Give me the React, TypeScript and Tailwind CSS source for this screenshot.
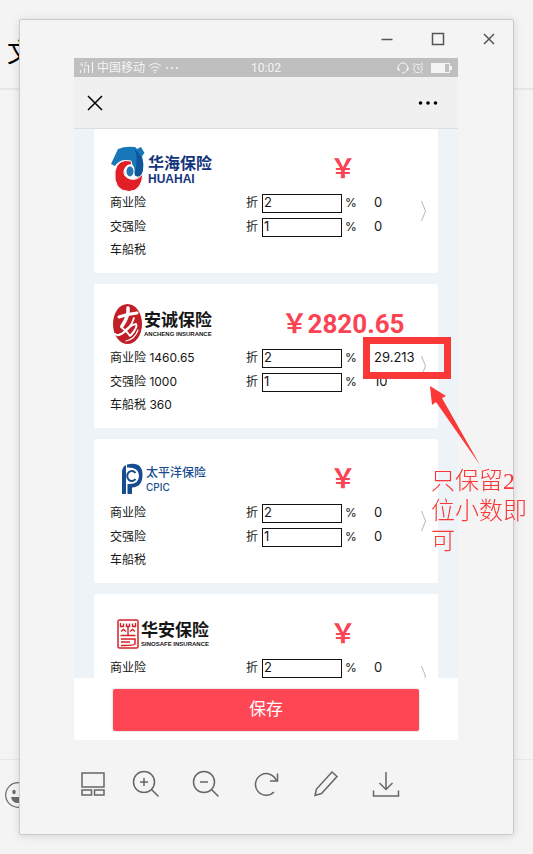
import type { ReactNode } from "react";

type Quote = {
  name: string;
  logo: ReactNode;
  total: string;
  commercial: string;
  compulsory: string;
  tax: string;
  commercialRebate: string;
  compulsoryRebate: string;
};

const CJK = "font-['Inter','Noto_Sans_CJK_SC',sans-serif]";

function HuahaiLogo() {
  return (
    <div className="flex h-11 items-center text-[#14357d]">
      <svg width="38" height="46" viewBox="0 0 38 46" aria-hidden="true">
        <path
          d="M1 18 L8 3 Q15 0 25 1 L27 3 L31 1 L34.500 7 L32 10 Q34 17 33 24 Q31 32 22 35 L14 27 L20 15 Q10 12 5 20 Z"
          fill="#1877b8"
        />
        <path d="M24 2 Q30 14 22 35 Q32 32 33 24 Q34 16 31 10 Z" fill="#0f559b" />
        <path
          d="M21 15 Q8 12 5 25 Q3 45 19 45.500 Q32 45 33 27 Q28 35 21 33 Q13 31 14 25 Q15 20 22 19 Z"
          fill="#e01f26"
          stroke="#fff"
        />
        <path d="M21 18 Q14 19 14.500 25 Q15 32 21 33.500 Q27 33 30 30 Q24 32 24.500 26 Q25 19 21 18Z" fill="#fff" />
        <ellipse cx="20" cy="25.500" rx="3.500" ry="5" fill="#2177b5" />
      </svg>
      <div>
        <div className="text-base leading-5 font-bold">华海保险</div>
        <div className="font-['Liberation_Sans',sans-serif] text-[12px] leading-3 font-bold">HUAHAI</div>
      </div>
    </div>
  );
}

function AnchengLogo() {
  return (
    <div className="flex h-11 items-center text-[#161616]">
      <svg width="34" height="42" viewBox="0 0 34 42" aria-hidden="true">
        <ellipse cx="17.500" cy="21" rx="14.500" ry="20" fill="#c01f26" />
        <g fill="none" stroke="#fff" strokeLinecap="round">
          <path d="M9 14 Q17 11 27 10" strokeWidth="3" />
          <path d="M18 5 Q19 13 12 23" strokeWidth="3.500" />
          <path d="M5 31 Q9 34 14 29 Q20 22 26 21 Q28 24 21 32" strokeWidth="2" />
          <path d="M11 24 Q17 28 20 33 M24 15 Q20 28 9 32" strokeWidth="1.800" />
          <path d="M28 27 Q25 36 16 38" strokeWidth="1.200" />
        </g>
      </svg>
      <div>
        <div className="text-[17px] leading-5 font-bold">安诚保险</div>
        <div className="font-['Liberation_Sans',sans-serif] text-[6px] leading-2 font-bold">ANCHENG INSURANCE</div>
      </div>
    </div>
  );
}

function CpicLogo() {
  return (
    <div className="flex h-11 items-center text-[#174d90]">
      <svg width="36" height="32" viewBox="0 0 36 32" aria-hidden="true">
        <path d="M12 31 V9 Q12 4 16 2 V31Z" fill="#174d90" />
        <path d="M17 1.500 Q32.500 -2 32.500 12 Q32.500 24 22 24.500 V31 H17.500 V21 Q29 22 29 12.500 Q28.500 4 17 4.500Z" fill="#174d90" />
        <path d="M25.500 10 A4.600 5 0 1 0 25.500 16" fill="none" stroke="#174d90" strokeWidth="2" />
      </svg>
      <div>
        <div className="text-[12px] leading-4 font-medium">太平洋保险</div>
        <div className="text-[10px] leading-3 font-medium">CPIC</div>
      </div>
    </div>
  );
}

function SinosafeLogo() {
  return (
    <div className="flex h-11 items-center text-[#161616]">
      <svg width="31" height="30" viewBox="0 0 31 30" fill="none" stroke="#d3222a" aria-hidden="true">
        <rect x="8" y="1" width="20" height="28" rx="1.500" strokeWidth="1.500" />
        <path d="M10.500 4 V7.500 H13.500 V4.500 M16.500 4.500 V7.500 H19.500 V4.500 M22.500 4.500 V7.500 H25.500 V4" strokeWidth="1.400" />
        <path d="M18 8 V17 M10.500 16.500 H25.500 M11 12.500 L13.500 10.500 L16 12.500 M20 12.500 L22.500 10.500 L25 12.500" strokeWidth="1.400" />
        <path d="M11 20 H25 V25 Q22 27 11 26.500 M11 23 H20" strokeWidth="1.500" />
      </svg>
      <div>
        <div className="text-[17px] leading-5 font-bold">华安保险</div>
        <div className="font-['Liberation_Sans',sans-serif] text-[6px] leading-2 font-bold">SINOSAFE INSURANCE</div>
      </div>
    </div>
  );
}

const quotes: Quote[] = [
  { name: "华海保险", logo: <HuahaiLogo />, total: "", commercial: "", compulsory: "", tax: "", commercialRebate: "0", compulsoryRebate: "0" },
  { name: "安诚保险", logo: <AnchengLogo />, total: "2820.65", commercial: "1460.65", compulsory: "1000", tax: "360", commercialRebate: "29.213", compulsoryRebate: "10" },
  { name: "太平洋保险", logo: <CpicLogo />, total: "", commercial: "", compulsory: "", tax: "", commercialRebate: "0", compulsoryRebate: "0" },
  { name: "华安保险", logo: <SinosafeLogo />, total: "", commercial: "", compulsory: "", tax: "", commercialRebate: "0", compulsoryRebate: "0" },
];

function RateRow({ label, company, amount, rate, rebate }: { label: string; company: string; amount: string; rate: string; rebate: string }) {
  return (
    <div className="flex h-6 items-center">
      <span className="flex-1">
        {label} {amount}
      </span>
      <label className="flex items-center">
        <span className="w-4">折</span>
        <input
          aria-label={`${company} ${label} 折扣`}
          defaultValue={rate}
          className="h-[19px] w-20 border border-[#111] bg-white px-px text-[13px] outline-none"
        />
        <span className="w-8 pl-[3px]">%</span>
      </label>
      <span className="w-16 text-[13px]">{rebate}</span>
    </div>
  );
}

function QuoteCard({ quote }: { quote: Quote }) {
  return (
    <article className="flex h-36 shrink-0 flex-col rounded-xs bg-white pl-4 text-[12px] text-[#151515]">
      <div className="flex h-[62px] shrink-0 items-end">
        <div className="flex-1">{quote.logo}</div>
        <div className="w-[190px] pb-1.5 text-center font-['Roboto','Noto_Sans_CJK_SC',sans-serif] text-[26px] leading-8 font-bold text-[#fa4454]">
          ￥{quote.total}
        </div>
      </div>
      <div className="relative">
        <RateRow label="商业险" company={quote.name} amount={quote.commercial} rate="2" rebate={quote.commercialRebate} />
        <RateRow label="交强险" company={quote.name} amount={quote.compulsory} rate="1" rebate={quote.compulsoryRebate} />
        <div className="flex h-[22px] items-center">车船税 {quote.tax}</div>
        <button aria-label="详情" className="absolute top-2 right-2.5 text-[#b8b8b8]">
          <svg width="8" height="24" viewBox="0 0 8 24" fill="none" stroke="currentColor">
            <path d="M1.500 2 L5.500 12 L1.500 22" />
          </svg>
        </button>
      </div>
    </article>
  );
}

function StatusBar() {
  return (
    <div className="grid h-[19px] shrink-0 grid-cols-[1fr_auto_1fr] items-center bg-[#bfbfbf] px-[5px] text-[12px] leading-4 text-[#f4f4f4]">
      <div className="flex items-center gap-[3px]">
        <svg width="15" height="13" viewBox="0 0 15 13" fill="none" stroke="currentColor" aria-hidden="true">
          <path d="M1.500 9 V12 M5.500 7 V12 M9.500 4 V12 M13.500 1 V12" strokeWidth="1.200" />
          <path d="M3 1 L1 4 H4 M3.500 2.500 V6 M8 1.500 H6 V5 H8 V3.500" strokeWidth="0.700" />
        </svg>
        <span>中国移动</span>
        <svg width="14" height="12" viewBox="0 0 14 12" fill="none" stroke="currentColor" aria-hidden="true">
          <path d="M1 4 Q7 -1 13 4 M3 6.500 Q7 3 11 6.500 M5 9 Q7 7 9 9" />
          <circle cx="7" cy="10.500" r="0.800" fill="currentColor" stroke="none" />
        </svg>
        <svg width="14" height="4" viewBox="0 0 14 4" fill="currentColor" aria-hidden="true">
          <circle cx="2" cy="2" r="1" />
          <circle cx="7" cy="2" r="1" />
          <circle cx="12" cy="2" r="1" />
        </svg>
      </div>
      <span className="font-['Roboto',sans-serif]">10:02</span>
      <div className="flex items-center justify-end gap-[3px]">
        <svg width="12" height="12" viewBox="0 0 12 12" fill="none" stroke="currentColor" aria-hidden="true">
          <path d="M2.500 9 A4.800 4.800 0 1 1 9.500 9 M1 5 V8 H3 M11 5 V8 H9 M9.500 9 L7 11 H5" />
        </svg>
        <svg width="12" height="12" viewBox="0 0 12 12" fill="none" stroke="currentColor" aria-hidden="true">
          <circle cx="6" cy="6.500" r="4.200" />
          <path d="M6 4 V7 H8 M0.800 3 L3 1 M11.200 3 L9 1 M2.500 10.500 L1.500 11.500 M9.500 10.500 L10.500 11.500" />
        </svg>
        <svg width="26" height="10" viewBox="0 0 26 10" aria-hidden="true">
          <rect x="4.500" y="0.500" width="18" height="9" fill="none" stroke="currentColor" />
          <rect x="5" y="1" width="13" height="8" fill="currentColor" />
          <rect x="23" y="3" width="2" height="4" fill="currentColor" />
        </svg>
      </div>
    </div>
  );
}

function IconButton({ label, children }: { label: string; children: ReactNode }) {
  return (
    <button aria-label={label} className="flex size-8 items-center justify-center">
      <svg width="28" height="28" viewBox="0 0 28 28" fill="none" stroke="currentColor" strokeWidth="1.500">
        {children}
      </svg>
    </button>
  );
}

function ChatBackdrop() {
  return (
    <div className="absolute inset-0 flex flex-col bg-[#f4f4f4]">
      <div className="flex h-[90px] items-center border-b-2 border-[#e6e6e6] pt-4 pl-[7px] text-[26px] text-black">文</div>
      <div className="flex-1" />
      <div className="h-[95px] border-t border-[#e8e8e8] pt-[22px] pl-[5px]">
        <svg width="26" height="26" viewBox="0 0 26 26" aria-hidden="true">
          <circle cx="13" cy="13" r="12.300" fill="none" stroke="#6b6b6b" strokeWidth="1.200" />
          <ellipse cx="9" cy="10" rx="1.700" ry="2.200" fill="#6b6b6b" />
          <ellipse cx="17" cy="10" rx="1.700" ry="2.200" fill="#6b6b6b" />
          <path d="M6 15 H20 Q19 21 13 21 Q7 21 6 15Z" fill="#6b6b6b" />
        </svg>
      </div>
    </div>
  );
}

export default function App() {
  return (
    <div className={`relative flex h-screen flex-col overflow-hidden p-[19px] ${CJK}`}>
      <ChatBackdrop />
      <main className="relative flex min-h-0 flex-1 flex-col rounded-xs border border-[#cbcbcb] bg-[#f4f4f4] shadow-[0_1px_10px_rgba(0,0,0,0.13)]">
        <div className="flex h-[38px] shrink-0 justify-end gap-[3px] text-[#555]">
          <button aria-label="最小化" className="flex w-12 items-center justify-center">
            <svg width="12" height="12" viewBox="0 0 12 12" stroke="currentColor" strokeWidth="1.500"><path d="M0.500 6.500 H11.500" /></svg>
          </button>
          <button aria-label="最大化" className="flex w-12 items-center justify-center">
            <svg width="14" height="14" viewBox="0 0 14 14" fill="none" stroke="currentColor" strokeWidth="1.500"><path d="M1.500 1.500 H12.500 V12.500 H1.500Z" /></svg>
          </button>
          <button aria-label="关闭" className="flex w-12 items-center justify-center">
            <svg width="12" height="12" viewBox="0 0 12 12" stroke="currentColor" strokeWidth="1.500"><path d="M1 1 L11 11 M11 1 L1 11" /></svg>
          </button>
        </div>

        <section className="mr-[55px] ml-[54px] flex min-h-0 flex-1 flex-col">
          <StatusBar />
          <div className="flex h-[52px] shrink-0 items-center justify-between border-b border-[#dedede] bg-[#f0f0f0] px-3 text-black">
            <button aria-label="返回" className="p-px">
              <svg width="16" height="16" viewBox="0 0 16 16" stroke="currentColor" strokeWidth="1.500"><path d="M1 1 L15 15 M15 1 L1 15" /></svg>
            </button>
            <button aria-label="更多" className="px-2">
              <svg width="20" height="4" viewBox="0 0 20 4" fill="currentColor">
                <circle cx="2.500" cy="2" r="1.800" />
                <circle cx="10" cy="2" r="1.800" />
                <circle cx="17.500" cy="2" r="1.800" />
              </svg>
            </button>
          </div>
          <div className="flex min-h-0 flex-1 flex-col gap-[11px] overflow-y-auto bg-[#eef3f7] px-5 [scrollbar-width:none]">
            {quotes.map((quote) => (
              <QuoteCard key={quote.name} quote={quote} />
            ))}
          </div>
          <div className="shrink-0 bg-white px-[39px] pt-[11px] pb-[9px]">
            <button className="h-[42px] w-full rounded-xs bg-[#ff4655] text-[17px] text-white shadow-[0_0_2px_rgba(0,0,0,0.3)]">保存</button>
          </div>
        </section>

        <div className="flex h-[94px] shrink-0 items-center gap-[21px] pb-1.5 pl-[57px] text-[#666]">
          <IconButton label="缩略图">
            <path d="M3 3 H25 V17 H3Z M3 20 H12.500 V25 H3Z M15.500 20 H25 V25 H15.500Z" />
          </IconButton>
          <div className="flex gap-7">
            <IconButton label="放大">
              <circle cx="12" cy="12" r="10.500" />
              <path d="M19.500 19.500 L26.500 26.500 M8 12 H16 M12 8 V16" />
            </IconButton>
            <IconButton label="缩小">
              <circle cx="12" cy="12" r="10.500" />
              <path d="M19.500 19.500 L26.500 26.500 M8 12 H16" />
            </IconButton>
            <IconButton label="旋转">
              <path d="M22 22 A10.800 10.800 0 1 1 24.500 11 M25.500 3.500 V11 H18" />
            </IconButton>
            <IconButton label="编辑">
              <path d="M20 2 L25 6.500 L9.500 23.500 L3 25.500 L4.500 19Z" />
            </IconButton>
            <IconButton label="下载">
              <path d="M14 2 V19.500 M7.500 13 L14 19.500 L20.500 13 M1.500 20.500 V26 H26.500 V20.500" />
            </IconButton>
          </div>
        </div>
      </main>

      <div className="pointer-events-none absolute top-[337px] left-[363px] h-[42px] w-[88px] border-7 border-[#fb3838]" />
      <svg className="pointer-events-none absolute top-[385px] left-[429px]" width="54" height="82" viewBox="0 0 54 82" aria-hidden="true">
        <path d="M1 1 L17 11 L13 13 L51 80 L7 17 L3 20Z" fill="#fb3838" />
      </svg>
      <p className="pointer-events-none absolute top-[466px] left-[431px] w-24 font-['Liberation_Serif','Noto_Sans_CJK_SC',serif] text-[24px] leading-[30px] font-light text-[#fb3838]">
        只保留2
        <br />
        位小数即
        <br />可
      </p>
    </div>
  );
}
